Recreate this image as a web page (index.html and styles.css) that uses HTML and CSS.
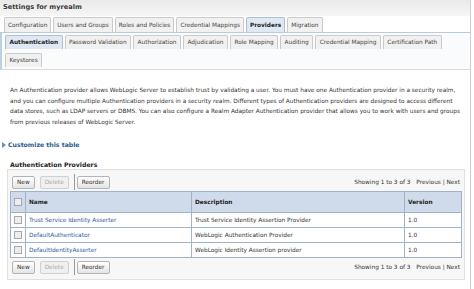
FILE: index.html
```html
<!DOCTYPE html>
<html lang="en">
<head>
    <meta charset="UTF-8">
    <title>Settings for myrealm</title>
    <link rel="stylesheet" href="styles.css">
</head>
<body>
<div class="console">
    <div class="title-bar">Settings for myrealm</div>

    <ul class="tabs main-tabs">
        <li>Configuration</li>
        <li>Users and Groups</li>
        <li>Roles and Policies</li>
        <li>Credential Mappings</li>
        <li class="active">Providers</li>
        <li>Migration</li>
    </ul>

    <div class="subtab-panel">
        <ul class="tabs sub-tabs">
            <li class="active">Authentication</li>
            <li>Password Validation</li>
            <li>Authorization</li>
            <li>Adjudication</li>
            <li>Role Mapping</li>
            <li>Auditing</li>
            <li>Credential Mapping</li>
            <li>Certification Path</li>
        </ul>
        <ul class="tabs sub-tabs">
            <li>Keystores</li>
        </ul>
    </div>

    <div class="content">
        <p class="intro">An Authentication provider allows WebLogic Server to establish trust by validating a user. You must have one Authentication provider in a security realm, and you can configure multiple Authentication providers in a security realm. Different types of Authentication providers are designed to access different data stores, such as LDAP servers or DBMS. You can also configure a Realm Adapter Authentication provider that allows you to work with users and groups from previous releases of WebLogic Server.</p>

        <a class="customize" href="#"><span class="arrow"></span>Customize this table</a>

        <h2>Authentication Providers</h2>

        <div class="table-box">
            <div class="toolbar">
                <button>New</button>
                <button disabled>Delete</button>
                <span class="sep"></span>
                <button>Reorder</button>
                <div class="pager">Showing 1 to 3 of 3 <span class="nav">Previous | Next</span></div>
            </div>

            <table class="providers">
                <tr>
                    <th class="check"><span class="box"></span></th>
                    <th class="name">Name</th>
                    <th class="desc">Description</th>
                    <th>Version</th>
                </tr>
                <tr>
                    <td class="check"><span class="box"></span></td>
                    <td><a href="#">Trust Service Identity Asserter</a></td>
                    <td>Trust Service Identity Assertion Provider</td>
                    <td>1.0</td>
                </tr>
                <tr>
                    <td class="check"><span class="box"></span></td>
                    <td><a href="#">DefaultAuthenticator</a></td>
                    <td>WebLogic Authentication Provider</td>
                    <td>1.0</td>
                </tr>
                <tr>
                    <td class="check"><span class="box"></span></td>
                    <td><a href="#">DefaultIdentityAsserter</a></td>
                    <td>WebLogic Identity Assertion provider</td>
                    <td>1.0</td>
                </tr>
            </table>

            <div class="toolbar bottom">
                <button>New</button>
                <button disabled>Delete</button>
                <span class="sep"></span>
                <button>Reorder</button>
                <div class="pager">Showing 1 to 3 of 3 <span class="nav">Previous | Next</span></div>
            </div>
        </div>
    </div>
</div>
</body>
</html>
```

FILE: styles.css
```css
body {
    font-family: "DejaVu Sans", Verdana, sans-serif;
    font-size: 5.8px;
    color: #333;
    background-color: #ffffff;
    margin: 0;
}
.console {
    width: 470px;
    min-height: 289px;
    border-right: 1px solid #cfcfcf;
}
.title-bar {
    height: 16px;
    line-height: 15px;
    padding-left: 3px;
    font-size: 6.6px;
    font-weight: bold;
    color: #3a3a3a;
    background: linear-gradient(#e9e9e9, #f6f6f6);
}
.tabs {
    display: flex;
    gap: 2px;
    list-style: none;
    margin: 0;
    padding: 0;
}
.tabs li {
    padding: 0 3px;
    border: 1px solid #cacaca;
    border-bottom: none;
    border-radius: 2px 2px 0 0;
    background-color: #f1f1f1;
    color: #444;
    white-space: nowrap;
}
.tabs li.active {
    font-weight: bold;
    color: #222;
    background-color: #dfe9f4;
    border-color: #aebfd3;
}
.main-tabs {
    padding: 1px 0 0 4px;
    border-bottom: 1px solid #b9cadb;
}
.main-tabs li {
    height: 14px;
    line-height: 14px;
}
.subtab-panel {
    border-left: 2px solid #bcd0e3;
    border-bottom: 1px solid #d9d9d9;
    background-color: #fafbfc;
    padding: 2px 0 2px 3px;
}
.sub-tabs li {
    height: 13px;
    line-height: 13px;
    padding: 0 3.5px;
}
.sub-tabs + .sub-tabs {
    margin-top: 4px;
}
.content {
    padding: 15px 0 0 0;
}
.intro {
    margin: 0 0 0 10px;
    width: 452px;
    line-height: 10.5px;
}
.customize {
    display: flex;
    align-items: center;
    gap: 2px;
    margin: 14px 0 0 2px;
    font-weight: bold;
    color: #2a5b8c;
    text-decoration: none;
    font-size: 6.2px;
}
.arrow {
    width: 0;
    height: 0;
    border-left: 4px solid #6f8fb0;
    border-top: 3px solid transparent;
    border-bottom: 3px solid transparent;
}
h2 {
    margin: 13px 0 1px 10px;
    font-size: 6.2px;
    font-weight: bold;
    color: #222;
}
.table-box {
    margin-left: 7px;
    width: 452px;
    padding: 3px 2px 3px 2px;
    background-color: #f7f7f7;
    border: 1px solid #e0e0e0;
}
.toolbar {
    display: flex;
    align-items: center;
    height: 18px;
    padding-left: 2px;
}
.toolbar.bottom {
    height: 18px;
}
button {
    font-family: inherit;
    font-size: 5.8px;
    height: 13px;
    padding: 0 4px;
    margin-right: 5px;
    color: #333;
    background: linear-gradient(#ffffff, #e4e4e4);
    border: 1px solid #b4b4b4;
    border-radius: 2px;
}
button:disabled {
    color: #aaa;
    border-color: #d0d0d0;
    background: #f0f0f0;
}
.sep {
    width: 1px;
    height: 16px;
    background-color: #9a9a9a;
    margin: 0 2px 0 0;
}
.pager {
    margin-left: auto;
    padding-right: 2px;
}
.nav {
    margin-left: 4px;
}
.providers {
    width: 452px;
    border-collapse: collapse;
    background-color: #ffffff;
}
.providers th, .providers td {
    border: 1px solid #9fb2c7;
    text-align: left;
    padding: 0 3px;
    height: 14px;
}
.providers th {
    height: 20px;
    background-color: #cfdbea;
    font-weight: bold;
    color: #222;
}
.providers .check {
    width: 8px;
    padding: 0 3px;
}
.providers .name {
    width: 159px;
}
.providers .desc {
    width: 206px;
}
.box {
    display: block;
    width: 6px;
    height: 6px;
    border: 1px solid #a8a8a8;
    background-color: #eeeeee;
}
.providers a {
    color: #2a5b9c;
    text-decoration: none;
}
```
